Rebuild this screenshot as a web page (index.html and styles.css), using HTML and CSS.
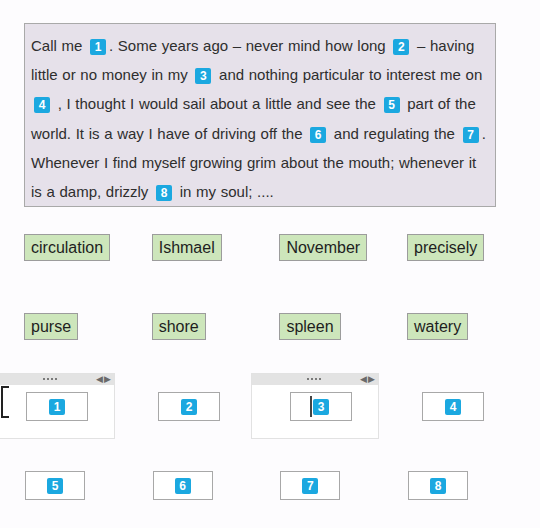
FILE: index.html
```html
<!DOCTYPE html>
<html lang="en">
<head>
    <meta charset="utf-8">
    <title>Cloze - Moby Dick</title>
    <link rel="stylesheet" href="styles.css">
</head>

<body>
    <main>
        <section class="passage">
            <p>
                Call me <span class="gap">1</span>. Some years ago &ndash; never mind how long <span class="gap">2</span> &ndash; having<br>
                little or no money in my <span class="gap">3</span> and nothing particular to interest me on<br>
                <span class="gap">4</span> , I thought I would sail about a little and see the <span class="gap">5</span> part of the<br>
                world. It is a way I have of driving off the <span class="gap">6</span> and regulating the <span class="gap">7</span>.<br>
                Whenever I find myself growing grim about the mouth; whenever it<br>
                is a damp, drizzly <span class="gap">8</span> in my soul; ....
            </p>
        </section>

        <section class="words">
            <div class="word">circulation</div>
            <div class="word">Ishmael</div>
            <div class="word">November</div>
            <div class="word">precisely</div>
            <div class="word">purse</div>
            <div class="word">shore</div>
            <div class="word">spleen</div>
            <div class="word">watery</div>
        </section>

        <section class="drops first">
            <div class="slot">
                <div class="panel">
                    <div class="panel-bar"><span class="dots"></span><span class="arrows">&#9664;&#9654;</span></div>
                    <div class="bracket"></div>
                </div>
                <div class="drop"><span class="gap">1</span></div>
            </div>
            <div class="slot">
                <div class="drop"><span class="gap">2</span></div>
            </div>
            <div class="slot">
                <div class="panel">
                    <div class="panel-bar"><span class="dots"></span><span class="arrows">&#9664;&#9654;</span></div>
                </div>
                <div class="drop"><span class="caret"></span><span class="gap">3</span></div>
            </div>
            <div class="slot">
                <div class="drop"><span class="gap">4</span></div>
            </div>
        </section>

        <section class="drops second">
            <div class="drop"><span class="gap">5</span></div>
            <div class="drop"><span class="gap">6</span></div>
            <div class="drop"><span class="gap">7</span></div>
            <div class="drop"><span class="gap">8</span></div>
        </section>
    </main>
</body>

</html>
```

FILE: styles.css
```css
html,
body {
    margin: 0;
    padding: 0;
    width: 100%;
    height: 100%;
    overflow: hidden;
}

body {
    background-color: #fdfcfe;
    font-family: "Liberation Sans", Arial, sans-serif;
    color: #2e2e2e;
}

main {
    padding: 23px 0 0 24px;
}

.passage {
    width: 470px;
    background-color: #e6e1ea;
    border: 1px solid #a9a9a9;
}

.passage p {
    margin: 0;
    padding: 7px 6px 0 6px;
    font-size: 15px;
    line-height: 29.2px;
    white-space: nowrap;
    word-spacing: 0.5px;
}

.gap {
    display: inline-block;
    width: 16px;
    height: 16px;
    margin: 0 3px;
    border-radius: 2px;
    background-color: #1ba8e0;
    color: #fff;
    font-size: 12px;
    font-weight: bold;
    line-height: 16px;
    text-align: center;
    vertical-align: 0;
    word-spacing: 0;
}

.words {
    display: grid;
    grid-template-columns: repeat(4, 127.7px);
    row-gap: 52px;
    margin-top: 27px;
}

.word {
    justify-self: start;
    box-sizing: border-box;
    height: 27px;
    padding: 0 6px;
    border: 1px solid #9c9c9c;
    background-color: #cde6bb;
    color: #1e1e1e;
    font-size: 16px;
    line-height: 26px;
}

.drops {
    display: grid;
}

.drops.first {
    grid-template-columns: repeat(4, 132px);
    margin: 52px 0 0 2px;
}

.drops.second {
    grid-template-columns: repeat(4, 127.7px);
    margin: 50px 0 0 1px;
}

.slot {
    position: relative;
}

.drop {
    position: relative;
    display: flex;
    align-items: center;
    justify-content: center;
    box-sizing: border-box;
    width: 60px;
    height: 29px;
    border: 1px solid #a8a8a8;
    background-color: #fff;
}

.first .drop {
    width: 62px;
}

.caret {
    width: 2px;
    height: 21px;
    background-color: #444;
    margin-right: 1px;
}

.caret + .gap {
    margin-left: 0;
}

.panel {
    position: absolute;
    left: -39px;
    top: -19px;
    box-sizing: border-box;
    width: 128px;
    height: 66px;
    border: 1px solid #e2e2e2;
    background-color: #fff;
}

.panel-bar {
    position: relative;
    height: 11px;
    background-color: #e3e3e3;
}

.dots {
    position: absolute;
    left: 55px;
    top: 4px;
    width: 14px;
    height: 2px;
    background: repeating-linear-gradient(90deg, #7a7a7a 0 2px, transparent 2px 4px);
}

.arrows {
    position: absolute;
    right: 2px;
    top: 0;
    font-size: 9px;
    line-height: 11px;
    letter-spacing: 1px;
    color: #6a6a6a;
}

.bracket {
    position: absolute;
    left: 13px;
    top: 12px;
    width: 6px;
    height: 28px;
    border: 2px solid #222;
    border-right: 0;
}
```
